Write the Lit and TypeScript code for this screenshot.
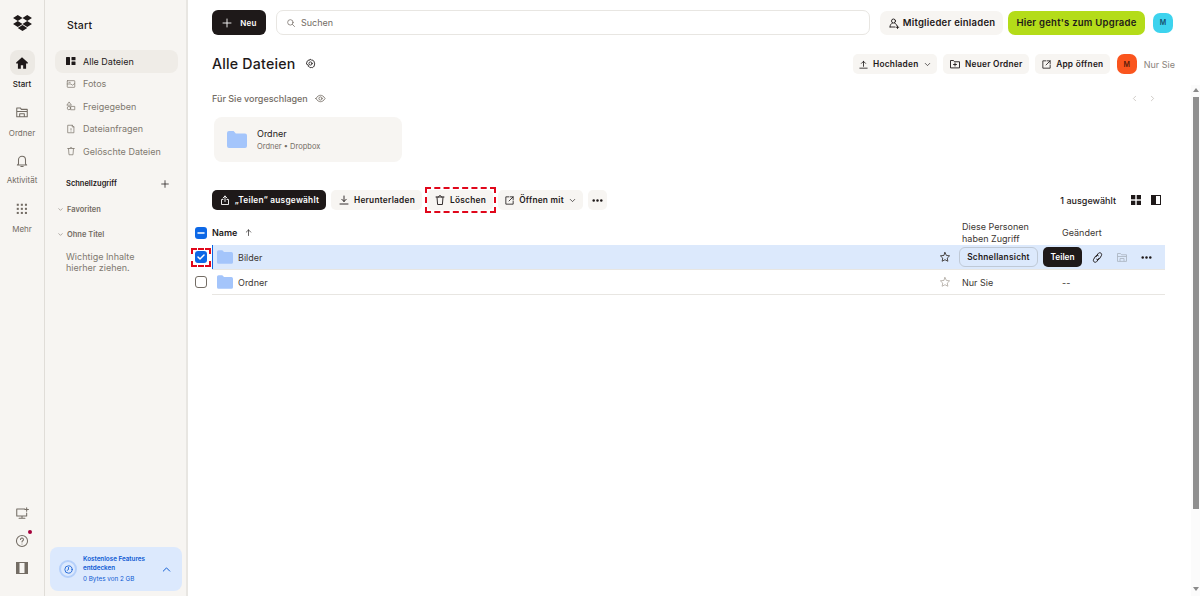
import { LitElement, html, css, svg } from "lit";
import { customElement } from "lit/decorators.js";

const ic = (body: unknown, size = 14, cls = "") => html`<svg class="ic ${cls}" width=${size} height=${size} viewBox="0 0 24 24" fill="none" stroke="currentColor" stroke-width="1.8" stroke-linecap="round" stroke-linejoin="round">${body}</svg>`;

const folderIcon = (w = 16, h = 14) => html`<svg class="folder" width=${w} height=${h} viewBox="0 0 20 17"><path d="M0 2a2 2 0 0 1 2-2h4.600l2.200 2.400H18a2 2 0 0 1 2 2V15a2 2 0 0 1-2 2H2a2 2 0 0 1-2-2z" fill="#a4c5fb"/></svg>`;

const I = {
  upload: svg`<path d="M12 16V5M7.500 9.500 12 5l4.500 4.500M4 20h16"/>`,
  uploadBox: svg`<path d="M12 15V4M8 8l4-4 4 4M8 11H5v10h14V11h-3"/>`,
  download: svg`<path d="M12 4v11M7.500 10.500 12 15l4.500-4.500M4 20h16"/>`,
  trash: svg`<path d="M4 6h16M9 6c0-4 6-4 6 0M6 6l1.200 15h9.600L18 6"/>`,
  open: svg`<path d="M11 4H4v16h16v-7M14 4h6v6M20 4l-9 9"/>`,
  newFolder: svg`<path d="M3 19V5h6l2 2.500h10V19zM12 10v6M9 13h6"/>`,
  chev: svg`<path d="m6 9 6 6 6-6"/>`,
  invite: svg`<circle cx="11" cy="8" r="4"/><path d="M4 20c0-4 2-7 4.500-7.500M13.500 12.500C16 13 17 15 17.500 17M4 20h10M19 18v5M16.500 20.500h5"/>`,
  search: svg`<circle cx="10.500" cy="10.500" r="6.500"/><path d="m15.500 15.500 5 5"/>`,
  gear: svg`<path d="m12 3 2.200 1.500 2.700-.1 1.200 2.400 2.400 1.300-.2 2.700L21.500 13l-1.300 2.300.1 2.700-2.500 1.100-1.500 2.200-2.600-.7-2.700.7-1.500-2.200-2.500-1.100.1-2.700L2.800 13l1.200-2.200-.2-2.700 2.400-1.300 1.200-2.400 2.700.1z"/><circle cx="12" cy="12" r="3.500"/>`,
  eye: svg`<path d="M2 12c3-5 6.500-7 10-7s7 2 10 7c-3 5-6.500 7-10 7s-7-2-10-7z"/><circle cx="12" cy="12" r="3.500"/>`,
  star: svg`<path d="m12 3 2.800 5.900 6.400.8-4.700 4.400 1.200 6.400L12 17.400l-5.700 3.100 1.200-6.400-4.700-4.400 6.400-.8z"/>`,
  link: svg`<path d="M9.500 10.500 13 5c1.300-2 3.700-2.300 5.300-1.100 1.500 1.200 1.800 3.300.7 5l-3.500 5.600c-1.200 1.800-3.500 2-5 .8M14.500 13.500 11 19c-1.300 2-3.700 2.300-5.300 1.100-1.500-1.200-1.800-3.300-.7-5l3.500-5.600c1.200-1.800 3.500-2 5-.8"/>`,
  photo: svg`<rect x="3" y="4" width="18" height="16" rx="1"/><path d="M3 12h9l3 3 6-4M7 8h3"/>`,
  shared: svg`<path d="m8 3 5 7H3zM12 13h9v8h-9z"/><circle cx="7" cy="17" r="4"/>`,
  req: svg`<path d="M5 3h10l4 4v14H5zM15 3v4h4M12 11v3M12 17v.1"/>`,
  bell: svg`<path d="M6 17V10a6 6 0 0 1 12 0v7l2 2H4zM10 21.500h4"/>`,
  railFolder: svg`<path d="M3 20V5h6l2 2.500h10V20zM3 11h18M8 20v-5h8v5"/>`,
  monitor: svg`<path d="M3 5h14M3 5v12h17v-5M12 17v4M7 21h10M20 3v6M17 6h6"/>`,
  help: svg`<circle cx="12" cy="12" r="9.500"/><path d="M9.500 9.500a2.500 2.500 0 1 1 3.800 2.100c-.9.600-1.300 1-1.300 2.100M12 17v.1"/>`,
  clock: svg`<circle cx="12" cy="12" r="8"/><path d="M12 7.500V12l-3 2"/>`,
  plus: svg`<path d="M12 4v16M4 12h16"/>`,
};

@customElement("app-root")
export class AppRoot extends LitElement {
  static styles = css`
    :host { display: block; width: 1200px; height: 596px; overflow: hidden; font-family: Inter, "Liberation Sans", sans-serif; color: #1e1919; background: #fff; }
    * { box-sizing: border-box; }
    svg { display: block; flex: none; }
    .app { display: flex; height: 596px; }

    .rail { width: 45px; flex: none; background: #f7f5f2; border-right: 1px solid #e0ddd8; display: flex; flex-direction: column; align-items: center; padding-top: 15px; }
    .logo { margin-bottom: 18px; }
    .rail-item { display: flex; flex-direction: column; align-items: center; color: #736c64; font-size: 8px; height: 49px; width: 44px; }
    .rail-item.tall { height: 48px; }
    .rail-icon { width: 25px; height: 25px; border-radius: 8px; display: flex; align-items: center; justify-content: center; margin-bottom: 4px; }
    .rail-item.tall .rail-icon { margin-bottom: 2px; }
    .rail-item.mehr .rail-icon { margin-bottom: 3px; }
    .rail-item.on { color: #1e1919; font-weight: 500; }
    .rail-item.on .rail-icon { background: #ece9e4; }
    .rail-bottom { margin-top: auto; display: flex; flex-direction: column; align-items: center; gap: 14px; padding-bottom: 22px; color: #736c64; }
    .help { position: relative; }
    .dot { position: absolute; top: -4px; right: -3px; width: 4px; height: 4px; border-radius: 50%; background: #a5003a; }

    .side { width: 143px; flex: none; background: #f7f5f2; border-right: 2px solid #e8e6e2; display: flex; flex-direction: column; padding: 0 5px 0 10px; }
    .side-title { font-size: 10.500px; font-weight: 500; margin: 19px 0 0 12px; height: 31px; letter-spacing: .2px; }
    .nav { display: flex; align-items: center; height: 22.500px; gap: 7px; padding-left: 11px; margin-right: 3px; color: #807970; font-size: 9px; border-radius: 8px; }
    .nav.on { background: #efece7; color: #1e1919; }
    .quick { display: flex; justify-content: space-between; align-items: center; font-size: 7.500px; font-weight: 600; color: #1e1919; margin: 14px 0 0 11px; padding-right: 11px; height: 14px; }
    .tree { display: flex; align-items: center; gap: 3px; font-size: 7.500px; font-weight: 600; color: #736c64; margin-left: 2px; height: 14px; }
    .tree.a { margin-top: 12px; }
    .tree.b { margin-top: 11px; }
    .hint { font-size: 9px; line-height: 11.500px; color: #807970; margin: 9px 0 0 11px; }
    .promo { margin: auto 0 5px -5px; width: 132px; height: 44px; background: #dce9fd; border-radius: 8px; display: flex; align-items: center; padding-left: 9px; color: #0d5ad3; font-size: 6.300px; }
    .promo-ring { width: 18px; height: 18px; border-radius: 50%; border: 2px solid #b4cffa; display: flex; align-items: center; justify-content: center; margin-right: 6px; flex: none; }
    .promo-text { flex: 1; line-height: 9px; }
    .promo-text b { font-weight: 600; display: block; }
    .promo-text span { display: block; margin-top: 2px; }
    .promo-chev { margin-right: 9px; transform: rotate(180deg); }

    .main { flex: 1; min-width: 0; display: flex; flex-direction: column; position: relative; padding: 0 10px 0 24px; }
    .top { display: flex; align-items: center; height: 25px; margin-top: 10px; gap: 10px; padding-right: 17px; }
    .btn { display: inline-flex; align-items: center; justify-content: center; gap: 4px; background: #f7f5f2; border-radius: 5px; font-size: 8.300px; font-weight: 600; height: 20px; padding: 0; white-space: nowrap; letter-spacing: .25px; color: #1e1919; flex: none; }
    .btn.dark { background: #1e1919; color: #fff; }
    .new { width: 54px; height: 25px; border-radius: 6px; gap: 7px; font-size: 8px; }
    .search { flex: 1; height: 25px; border: 1px solid #e8e6e2; border-radius: 7px; display: flex; align-items: center; gap: 5px; padding-left: 9px; font-size: 9px; color: #736c64; }
    .invite { height: 24px; width: 123px; border-radius: 7px; font-size: 9.500px; gap: 3px; }
    .upgrade { height: 24px; width: 137px; margin-left: -5px; border-radius: 7px; background: #b4dc19; font-size: 9.500px; }
    .avatar { width: 20px; height: 20px; border-radius: 7px; display: flex; align-items: center; justify-content: center; font-size: 7px; font-weight: 600; flex: none; }
    .avatar.c { background: #3dd3ee; margin-left: -2px; color: #14506e; }
    .avatar.o { background: #fa551e; color: #5a1c0a; margin-left: 1px; }

    .head { display: flex; align-items: center; height: 20px; margin-top: 19px; padding-right: 15px; }
    .head h1 { margin: -2px 0 0; font-size: 14.200px; font-weight: 500; letter-spacing: .2px; }
    .head .gear { margin-left: 9px; margin-top: -1px; }
    .head .actions { margin-left: auto; display: flex; gap: 6px; align-items: center; }
    .w84 { width: 84px; } .w86 { width: 86px; } .w75 { width: 75px; }
    .nursie { font-size: 9px; color: #8a837b; margin-left: 1px; }
    .sugg { display: flex; align-items: center; gap: 7px; font-size: 9px; font-weight: 500; color: #736c64; margin-top: 17px; height: 14px; padding-right: 33px; }
    .pager { margin-left: auto; display: flex; gap: 9px; color: #bbb5ae; }
    .card { width: 188px; height: 45px; background: #f7f5f2; border-radius: 8px; margin: 12px 0 0 2px; display: flex; align-items: center; padding-left: 13px; gap: 10px; }
    .card-t { font-size: 9px; color: #1e1919; }
    .card-s { font-size: 7.500px; color: #736c64; margin-top: 3px; }

    .tools { display: flex; align-items: center; height: 20px; margin-top: 28px; padding-right: 29px; }
    .t1 { width: 114px; margin-right: 5px; }
    .t2 { width: 91px; margin-right: 5px; }
    .t3 { width: 66px; margin-right: 5px; }
    .t4 { width: 85px; margin-right: 5px; }
    .t5 { width: 19px; }
    .count { margin-left: auto; font-size: 9px; font-weight: 500; }
    .view { display: flex; gap: 10px; margin-left: 15px; align-items: center; }
    .mark { position: absolute; border: 2px dashed #e0071b; pointer-events: none; }
    .m1 { left: 237px; top: 187px; width: 71px; height: 26px; }
    .m2 { left: 3px; top: 248px; width: 20px; height: 19px; }

    .cols { display: grid; grid-template-columns: 750px 100px 1fr; align-items: center; height: 35px; padding-top: 10px; font-size: 9px; color: #3b3632; line-height: 11.500px; }
    .name-h { display: flex; align-items: center; font-weight: 600; font-size: 9px; gap: 6px; color: #1e1919; }
    .name-h .arrow { margin-left: 1px; }
    .row { display: grid; grid-template-columns: 750px 100px 1fr; align-items: center; height: 25px; width: 953px; border-bottom: 1px solid #e8e6e2; font-size: 9px; position: relative; }
    .row.sel { background: #dce9fc; box-shadow: inset 1px 0 0 #0d68e6; }
    .cell-name { display: flex; align-items: center; gap: 5px; padding-left: 5px; position: relative; height: 100%; color: #3b3632; }
    .cell-name .star { margin-left: auto; margin-right: 11px; }
    .star.dim { color: #b5b0a9; }
    .cb { position: absolute; left: -17px; width: 12px; height: 12px; border-radius: 3px; display: flex; align-items: center; justify-content: center; flex: none; }
    .cb.on { background: #0d68e6; color: #fff; }
    .cb.off { background: #fff; border: 1px solid #736c64; }
    .cb.head-cb { position: static; margin-left: -17px; margin-right: -1px; }
    .hover { display: flex; align-items: center; }
    .hover.right { margin-left: -23px; }
    .quick-view { height: 20px; width: 79px; border: 1px solid #bfc9d6; border-radius: 6px; display: flex; align-items: center; justify-content: center; font-size: 8.300px; font-weight: 600; letter-spacing: .25px; margin-left: -3px; }
    .share { height: 20px; width: 39px; border-radius: 5px; background: #1e1919; color: #fff; display: flex; align-items: center; justify-content: center; font-size: 8.300px; font-weight: 600; margin-left: 4px; }
    .hover .lk { margin-left: 9px; }
    .hover .fd { margin-left: 12px; color: #aeb8c4; }
    .hover .mr { margin-left: 12px; }
    .ro { color: #3b3632; }

    .sb { position: absolute; right: 0; top: 85px; bottom: 0; width: 9px; background: #fbfbfb; display: flex; flex-direction: column; align-items: center; }
    .sb-arrow { width: 0; height: 0; border-left: 3px solid transparent; border-right: 3px solid transparent; border-bottom: 4px solid #8a8a8a; margin-top: 3px; }
    .sb-arrow.d { border-bottom: 0; border-top: 4px solid #8a8a8a; margin: auto 0 5px; }
    .sb-thumb { width: 6px; height: 412px; background: #8f8f8f; margin-top: 5px; }
  `;

  private rail(label: string, body: unknown, cls = "") {
    return html`<div class="rail-item ${cls}"><div class="rail-icon">${body}</div><div>${label}</div></div>`;
  }
  private nav(label: string, body: unknown, cls = "") {
    return html`<div class="nav ${cls}">${body}<span>${label}</span></div>`;
  }

  render() {
    const dots = html`<svg width="13" height="13" viewBox="0 0 24 24" fill="currentColor"><circle cx="5" cy="12" r="2.300"/><circle cx="12" cy="12" r="2.300"/><circle cx="19" cy="12" r="2.300"/></svg>`;
    return html`<div class="app">
      <aside class="rail">
        <svg class="logo" width="19" height="17" viewBox="0 0 30 27" fill="#1e1919"><path d="M7.500 0 0 4.800l7.500 4.800L15 4.800zM22.500 0 15 4.800l7.500 4.800 7.500-4.800zM0 14.400l7.500 4.800 7.500-4.800-7.500-4.800zM22.500 9.600 15 14.400l7.500 4.800 7.500-4.800zM7.500 20.800 15 25.600l7.500-4.800L15 16z"/></svg>
        ${this.rail("Start", html`<svg width="14" height="14" viewBox="0 0 24 24" fill="#1e1919"><path d="M12 2 2 11v2h3v9h5v-6h4v6h5v-9h3v-2z"/></svg>`, "on")}
        ${this.rail("Ordner", ic(I.railFolder, 14))}
        ${this.rail("Aktivität", ic(I.bell, 14), "tall")}
        ${this.rail("Mehr", html`<svg width="14" height="14" viewBox="0 0 24 24" fill="#736c64">${[3, 10, 17].flatMap((y) => [3, 10, 17].map((x) => svg`<rect x=${x} y=${y} width="3.500" height="3.500"/>`))}</svg>`, "mehr")}
        <div class="rail-bottom">
          ${ic(I.monitor, 14)}
          <div class="help">${ic(I.help, 14)}<span class="dot"></span></div>
          <svg width="12" height="12" viewBox="0 0 12 12"><rect x=".5" y=".5" width="11" height="11" fill="none" stroke="#736c64"/><rect x="1" y="1" width="2.500" height="10" fill="#736c64"/><rect x="8.500" y="1" width="2.500" height="10" fill="#736c64"/></svg>
        </div>
      </aside>

      <nav class="side">
        <div class="side-title">Start</div>
        ${this.nav("Alle Dateien", html`<svg width="10" height="10" viewBox="0 0 10 10" fill="#1e1919"><rect y="1" width="4" height="8" rx=".5"/><rect x="5.500" y="1" width="4" height="3.300" rx=".5"/><rect x="5.500" y="5.500" width="4" height="3.500" rx=".5"/></svg>`, "on")}
        ${this.nav("Fotos", ic(I.photo, 10))}
        ${this.nav("Freigegeben", ic(I.shared, 10))}
        ${this.nav("Dateianfragen", ic(I.req, 10))}
        ${this.nav("Gelöschte Dateien", ic(I.trash, 10))}
        <div class="quick"><span>Schnellzugriff</span>${ic(I.plus, 10)}</div>
        <div class="tree a">${ic(I.chev, 7)}<span>Favoriten</span></div>
        <div class="tree b">${ic(I.chev, 7)}<span>Ohne Titel</span></div>
        <div class="hint">Wichtige Inhalte<br />hierher ziehen.</div>
        <div class="promo">
          <div class="promo-ring">${ic(I.clock, 11)}</div>
          <div class="promo-text"><b>Kostenlose Features<br />entdecken</b><span>0 Bytes von 2 GB</span></div>
          <div class="promo-chev">${ic(I.chev, 13)}</div>
        </div>
      </nav>

      <main class="main">
        <div class="top">
          <div class="btn dark new">${ic(I.plus, 12)}<span>Neu</span></div>
          <div class="search">${ic(I.search, 10)}<span>Suchen</span></div>
          <div class="btn invite">${ic(I.invite, 12)}<span>Mitglieder einladen</span></div>
          <div class="btn upgrade">Hier geht's zum Upgrade</div>
          <div class="avatar c">M</div>
        </div>

        <div class="head">
          <h1>Alle Dateien</h1>
          <div class="gear">${ic(I.gear, 11)}</div>
          <div class="actions">
            <div class="btn w84">${ic(I.upload, 11)}<span>Hochladen</span>${ic(I.chev, 9)}</div>
            <div class="btn w86">${ic(I.newFolder, 12)}<span>Neuer Ordner</span></div>
            <div class="btn w75">${ic(I.open, 11)}<span>App öffnen</span></div>
            <div class="avatar o">M</div>
            <div class="nursie">Nur Sie</div>
          </div>
        </div>

        <div class="sugg"><span>Für Sie vorgeschlagen</span>${ic(I.eye, 11)}
          <div class="pager">${ic(svg`<path d="m15 6-6 6 6 6"/>`, 9)}${ic(svg`<path d="m9 6 6 6-6 6"/>`, 9)}</div>
        </div>

        <div class="card">${folderIcon(20, 17)}<div><div class="card-t">Ordner</div><div class="card-s">Ordner • Dropbox</div></div></div>

        <div class="tools">
          <div class="btn dark t1">${ic(I.uploadBox, 12)}<span>„Teilen“ ausgewählt</span></div>
          <div class="btn t2">${ic(I.download, 12)}<span>Herunterladen</span></div>
          <div class="btn t3">${ic(I.trash, 12)}<span>Löschen</span></div>
          <div class="btn t4">${ic(I.open, 11)}<span>Öffnen mit</span>${ic(I.chev, 9)}</div>
          <div class="btn t5">${dots}</div>
          <div class="count">1 ausgewählt</div>
          <div class="view">
            <svg width="10" height="10" viewBox="0 0 10 10" fill="#1e1919"><rect width="4.300" height="4.300"/><rect x="5.700" width="4.300" height="4.300"/><rect y="5.700" width="4.300" height="4.300"/><rect x="5.700" y="5.700" width="4.300" height="4.300"/></svg>
            <svg width="10" height="10" viewBox="0 0 10 10"><rect x=".5" y=".5" width="9" height="9" fill="none" stroke="#1e1919"/><rect x="1" y="1" width="4" height="8" fill="#1e1919"/></svg>
          </div>
        </div>

        <div class="cols">
          <div class="name-h"><span class="cb on head-cb">${ic(svg`<path d="M6 12h12" stroke-width="3"/>`, 12)}</span><span>Name</span><span class="arrow">${ic(svg`<path d="M12 20V5M6 11l6-6 6 6"/>`, 9)}</span></div>
          <div>Diese Personen<br />haben Zugriff</div>
          <div>Geändert</div>
        </div>
        <div class="row sel">
          <div class="cell-name"><span class="cb on">${ic(svg`<path d="m6 12 4 4 8-8" stroke-width="3"/>`, 12)}</span>${folderIcon()}<span>Bilder</span><span class="star">${ic(I.star, 12)}</span></div>
          <div class="hover"><div class="quick-view">Schnellansicht</div></div>
          <div class="hover right"><div class="share">Teilen</div><div class="lk">${ic(I.link, 13)}</div><div class="fd">${ic(I.railFolder, 12)}</div><div class="mr">${dots}</div></div>
        </div>
        <div class="row">
          <div class="cell-name"><span class="cb off"></span>${folderIcon()}<span>Ordner</span><span class="star dim">${ic(I.star, 12)}</span></div>
          <div class="ro">Nur Sie</div>
          <div class="ro">--</div>
        </div>
        <div class="mark m1"></div>
        <div class="mark m2"></div>
        <div class="sb"><span class="sb-arrow"></span><span class="sb-thumb"></span><span class="sb-arrow d"></span></div>
      </main>
    </div>`;
  }
}
